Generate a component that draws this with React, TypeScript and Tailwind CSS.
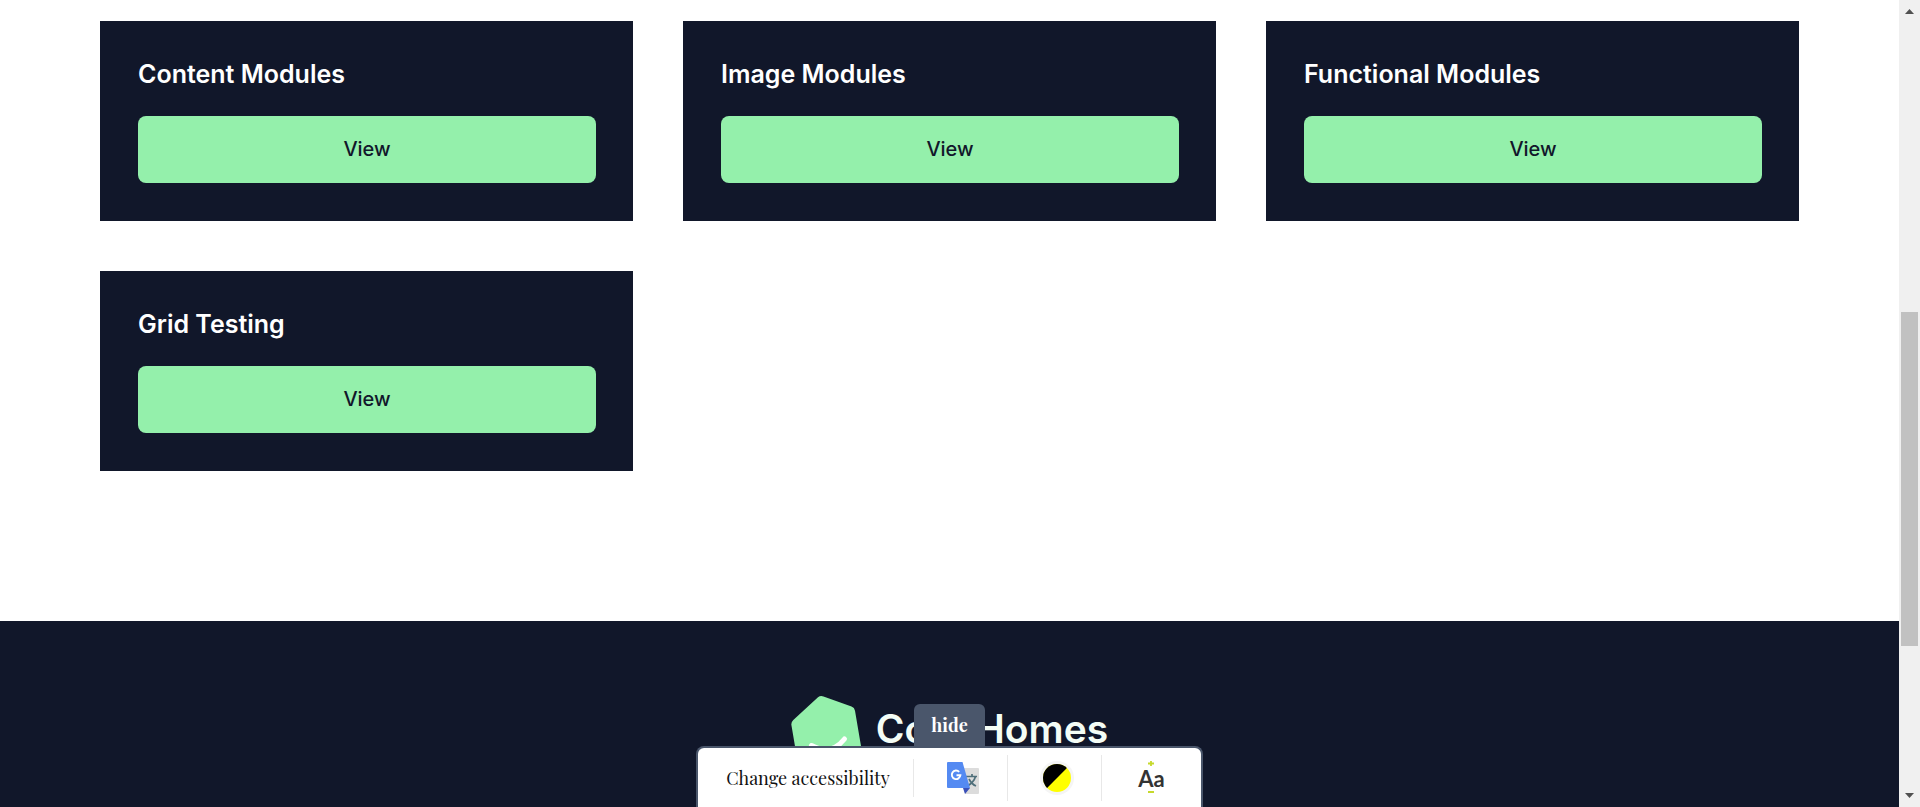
import React from "react";

const modules = ["Content Modules", "Image Modules", "Functional Modules", "Grid Testing"];

function ModuleCard({ title }: { title: string }) {
  return (
    <article className="bg-[#11172a] pt-[37px] pr-[37px] pb-[38px] pl-[38px]">
      <h2 className="mb-[26px] text-[25px] leading-8 font-semibold text-white">{title}</h2>
      <a
        href="#view"
        className="flex h-[67px] items-center justify-center rounded-lg bg-[#94f0ab] pb-[2px] text-xl font-medium text-[#11172a]"
      >
        View
      </a>
    </article>
  );
}

function LogoMark() {
  return (
    <svg viewBox="0 0 72 80" className="h-20 w-[72px]" aria-hidden="true">
      <path
        d="M27 1.2Q29.500 -.6 32.500 .5L60.500 10.500Q63.500 11.600 64 14.800L70.500 53Q71 56 68.500 58L44 78Q41.500 80 38.500 79L10 69Q7 68 6.500 65L.4 29Q0 26 2.300 24Z"
        fill="#94f0ab"
      />
      <path d="M20.500 49.500Q40 60 53.500 43" fill="none" stroke="#fff" strokeWidth="5" strokeLinecap="round" />
    </svg>
  );
}

function TranslateIcon() {
  return (
    <svg viewBox="0 0 32 32" className="size-8" aria-hidden="true">
      <path d="M14 6H31Q32 6 32 7V31Q32 32 31 32H18Z" fill="#dcdcdc" />
      <path d="M16 26H23L18 32Z" fill="#3a50b8" />
      <path d="M19 14.500H30M25 12V14.500M28.500 14.500Q27 20 20.500 24M22 17Q24.500 22 29 24" fill="none" stroke="#4f6f7a" strokeWidth="1.700" />
      <path d="M1 0H15.500L23 26H1Q0 26 0 25V1Q0 0 1 0Z" fill="#548af2" />
      <path d="M12.200 9.800A4.300 4.300 0 1 0 13.400 13.200H9.500" fill="none" stroke="#fff" strokeWidth="1.900" />
    </svg>
  );
}

function ContrastIcon() {
  return (
    <svg viewBox="0 0 34 34" className="size-[34px]" aria-hidden="true">
      <circle cx="17" cy="17" r="17" fill="#f5f5f5" />
      <circle cx="17" cy="17" r="14" fill="#ff0" />
      <path d="M7.100 26.900A14 14 0 0 1 26.900 7.100Z" fill="#000" />
    </svg>
  );
}

function TextSizeIcon() {
  return (
    <span className="flex flex-col items-center" aria-hidden="true">
      <svg viewBox="0 0 6 5" className="h-[5px] w-[6px]">
        <path d="M0 2.500H6M3 0V5" stroke="#c6d92c" strokeWidth="1.800" />
      </svg>
      <span className="font-['Lato',sans-serif] text-[22px] leading-[25px] font-bold text-[#333]">Aa</span>
      <svg viewBox="0 0 6 2" className="h-[2px] w-[6px]">
        <path d="M0 1H6" stroke="#c6d92c" strokeWidth="2" />
      </svg>
    </span>
  );
}

function AccessibilityBar() {
  return (
    <div className="absolute inset-x-0 bottom-0 flex flex-col items-center font-['Playfair_Display','Liberation_Serif',serif]">
      <button className="h-[42px] w-[71px] rounded-t-md bg-[#4a566b] text-lg font-bold text-white">hide</button>
      <div className="flex h-[61px] items-start rounded-t-lg border-x-2 border-t-2 border-[#4a566b] bg-white pt-[7px]">
        <span className="mt-1 flex h-[38px] w-[216px] items-center justify-center border-r border-[#e8e8e8] pl-[5px] text-lg text-[#111]">
          Change accessibility
        </span>
        <button aria-label="Translate" className="flex h-[46px] w-[94px] items-center justify-center border-r border-[#e8e8e8] pl-[5px]">
          <TranslateIcon />
        </button>
        <button aria-label="Contrast" className="flex h-[46px] w-[94px] items-center justify-center border-r border-[#e8e8e8] pl-[5px]">
          <ContrastIcon />
        </button>
        <button aria-label="Text size" className="flex h-[46px] w-[99px] items-center justify-center pb-[2px]">
          <TextSizeIcon />
        </button>
      </div>
    </div>
  );
}

function ScrollRail() {
  return (
    <div className="flex w-[21px] shrink-0 flex-col items-center bg-[#f0f0f0] py-[9px]" aria-hidden="true">
      <svg viewBox="0 0 9 5" className="h-[5px] w-[9px]">
        <path d="M4.500 0L9 5H0Z" fill="#505050" />
      </svg>
      <div className="flex w-full flex-1 flex-col items-center">
        <div className="grow-[298]" />
        <div className="w-[17px] grow-[334] bg-[#c1c1c1]" />
        <div className="grow-[147]" />
      </div>
      <svg viewBox="0 0 9 5" className="h-[5px] w-[9px]">
        <path d="M4.500 5L9 0H0Z" fill="#505050" />
      </svg>
    </div>
  );
}

export default function App() {
  return (
    <div className="flex h-screen overflow-hidden bg-white font-['Inter',sans-serif]">
      <div className="relative flex min-w-0 flex-1 flex-col">
        <main className="grid grid-cols-3 gap-[50px] px-[100px] pt-[21px] pb-[150px]">
          {modules.map((title) => (
            <ModuleCard key={title} title={title} />
          ))}
        </main>
        <footer className="flex flex-1 items-start justify-center gap-[13px] bg-[#11172a] pt-[75px]">
          <LogoMark />
          <span className="mt-[9px] text-[39px] leading-12 font-semibold text-[#f4fdf6]">Core Homes</span>
        </footer>
        <AccessibilityBar />
      </div>
      <ScrollRail />
    </div>
  );
}
